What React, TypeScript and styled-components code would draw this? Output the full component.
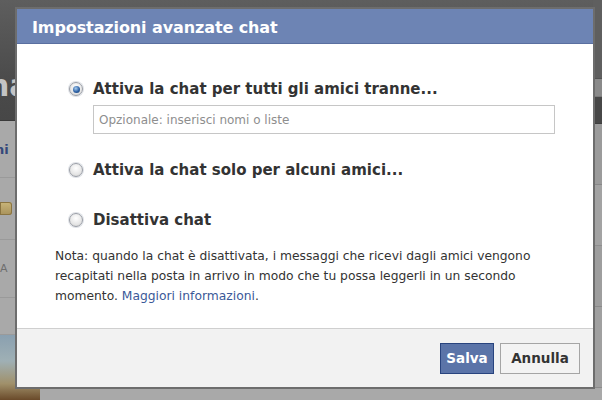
import React from "react";
import styled, { createGlobalStyle } from "styled-components";

const Global = createGlobalStyle`
  html, body { margin: 0; padding: 0; }
  body { width: 602px; height: 400px; overflow: hidden; background: #8a8a8a; font-family: "DejaVu Sans", Verdana, sans-serif; }
`;

const Screen = styled.div`
  position: relative;
  width: 602px;
  height: 400px;
  overflow: hidden;
  background: #8b8b8b;
`;

/* page behind the dialog */
const Behind = styled.div`
  display: flex;
  flex-direction: column;
  height: 100%;
`;

const TopBar = styled.div`
  height: 121px;
  background: linear-gradient(#5e5e5e, #4a4a4a 70%, #474747);
  border-bottom: 1px solid #3a3a3a;
  display: flex;
  align-items: flex-start;
  box-sizing: border-box;
`;

const BigWord = styled.span`
  margin-top: 66px;
  margin-left: -12px;
  font: bold 30px "DejaVu Sans", sans-serif;
  color: #c4c4c4;
  line-height: 40px;
`;

const SideList = styled.div`
  flex: 1;
  background: #a9a9a9;
  display: flex;
  flex-direction: column;
`;

const SideItem = styled.div<{ $h: number }>`
  height: ${(p) => p.$h}px;
  border-bottom: 1px solid #9a9a9a;
  display: flex;
  align-items: center;
  box-sizing: border-box;
`;

const SideLink = styled.span`
  margin-left: -14px;
  font: bold 13px "DejaVu Sans", sans-serif;
  color: #34487a;
`;

const SideNote = styled.span`
  font: 11px "DejaVu Sans", sans-serif;
  color: #6e6e6e;
  letter-spacing: 2px;
`;

const SideIcon = styled.span`
  width: 12px;
  height: 13px;
  border-radius: 0 3px 3px 0;
  background: linear-gradient(#c9b57a, #a8925a);
  box-shadow: inset 0 0 0 1px #8a7440;
`;

const Photo = styled.div`
  height: 65px;
  width: 40px;
  background: linear-gradient(#8aa0b0 0%, #9fb0b5 40%, #a0906a 75%, #6a4a2a 100%);
`;

const RightBits = styled.div`
  position: absolute;
  right: 0;
  top: 0;
  width: 9px;
  height: 100%;
  display: flex;
  flex-direction: column;
`;

const RightBlock = styled.div<{ $h: number; $c: string }>`
  height: ${(p) => p.$h}px;
  background: ${(p) => p.$c};
  border-bottom: 1px solid rgba(0,0,0,0.12);
`;

/* dialog */
const Frame = styled.div`
  position: absolute;
  left: 15px;
  top: 7px;
  width: 580px;
  height: 382px;
  box-sizing: border-box;
  border: 2px solid rgba(60, 60, 60, 0.75);
  display: flex;
  flex-direction: column;
  background: #fff;
`;

const Header = styled.div`
  height: 35px;
  background: #6d84b4;
  border-bottom: 1px solid #5a6fa0;
  box-sizing: border-box;
  display: flex;
  align-items: center;
  padding-left: 15px;
  padding-top: 2px;
  color: #fff;
  font: bold 16px "DejaVu Sans", sans-serif;
  letter-spacing: -0.1px;
`;

const Body = styled.div`
  height: 284px;
  box-sizing: border-box;
  padding: 35px 38px 0 38px;
  display: flex;
  flex-direction: column;
`;

const Options = styled.div`
  margin-left: 14px;
  display: flex;
  flex-direction: column;
`;

const OptionRow = styled.label<{ $mt: number }>`
  display: flex;
  align-items: center;
  height: 20px;
  gap: 10px;
  margin-top: ${(p) => p.$mt}px;
  font: bold 15px "DejaVu Sans", sans-serif;
  color: #333;
`;

const Radio = styled.span<{ $on?: boolean }>`
  width: 14px;
  height: 14px;
  border-radius: 50%;
  box-sizing: border-box;
  border: 1px solid #9a9ea6;
  background: radial-gradient(circle at 50% 35%, #ffffff, #e4e4e4 65%, #c8c8c8);
  box-shadow: 0 0 0 1px rgba(190, 195, 205, 0.5);
  display: flex;
  align-items: center;
  justify-content: center;
  flex: none;
  &::after {
    content: "";
    display: ${(p) => (p.$on ? "block" : "none")};
    width: 7px;
    height: 7px;
    border-radius: 50%;
    background: radial-gradient(circle at 40% 35%, #a8cdf0, #2f63a6 55%, #17396b);
  }
`;

const TextInput = styled.div`
  margin: 6px 0 0 24px;
  height: 29px;
  box-sizing: border-box;
  border: 1px solid #c6c6c6;
  display: flex;
  align-items: center;
  padding-left: 5px;
  font: 12px "DejaVu Sans", sans-serif;
  color: #8e8e8e;
  width: 462px;
`;

const Note = styled.p`
  margin: 16px 0 0 0;
  font: 12.3px/20px "DejaVu Sans", sans-serif;
  color: #333;
`;

const Link = styled.a`
  color: #3b5998;
  text-decoration: none;
`;

const Footer = styled.div`
  flex: 1;
  background: #f2f2f2;
  border-top: 1px solid #cfcfcf;
  display: flex;
  justify-content: flex-end;
  align-items: center;
  gap: 6px;
  padding-right: 13px;
`;

const Button = styled.button<{ $primary?: boolean }>`
  height: 31px;
  box-sizing: border-box;
  padding: 0;
  font: bold 13.5px "DejaVu Sans", sans-serif;
  border: 1px solid ${(p) => (p.$primary ? "#29447e" : "#a5a5a5")};
  background: ${(p) => (p.$primary ? "#5b74a8" : "#f3f3f3")};
  color: ${(p) => (p.$primary ? "#fff" : "#333")};
  width: ${(p) => (p.$primary ? 54 : 80)}px;
  text-align: center;
`;

export default function App() {
  return (
    <Screen>
      <Global />
      <Behind>
        <TopBar>
          <BigWord>na</BigWord>
        </TopBar>
        <SideList>
          <SideItem $h={57}>
            <SideLink>oni</SideLink>
          </SideItem>
          <SideItem $h={62}>
            <SideIcon />
          </SideItem>
          <SideItem $h={58}>
            <SideNote>A c</SideNote>
          </SideItem>
          <SideItem $h={37} />
          <Photo />
        </SideList>
      </Behind>
      <RightBits>
        <RightBlock $h={78} $c="#5f5f5f" />
        <RightBlock $h={17} $c="#8a8a8a" />
        <RightBlock $h={26} $c="#474747" />
        <RightBlock $h={60} $c="#9b9b9b" />
        <RightBlock $h={60} $c="#a3a3a3" />
        <RightBlock $h={60} $c="#9e9e9e" />
        <RightBlock $h={80} $c="#a0a0a0" />
      </RightBits>
      <Frame>
        <Header>Impostazioni avanzate chat</Header>
        <Body>
          <Options>
            <OptionRow $mt={0}>
              <Radio $on />
              Attiva la chat per tutti gli amici tranne...
            </OptionRow>
            <TextInput>Opzionale: inserisci nomi o liste</TextInput>
            <OptionRow $mt={26}>
              <Radio />
              Attiva la chat solo per alcuni amici...
            </OptionRow>
            <OptionRow $mt={30}>
              <Radio />
              Disattiva chat
            </OptionRow>
          </Options>
          <Note>
            Nota: quando la chat è disattivata, i messaggi che ricevi dagli amici vengono
            recapitati nella posta in arrivo in modo che tu possa leggerli in un secondo
            momento. <Link href="#">Maggiori informazioni</Link>.
          </Note>
        </Body>
        <Footer>
          <Button $primary>Salva</Button>
          <Button>Annulla</Button>
        </Footer>
      </Frame>
    </Screen>
  );
}
